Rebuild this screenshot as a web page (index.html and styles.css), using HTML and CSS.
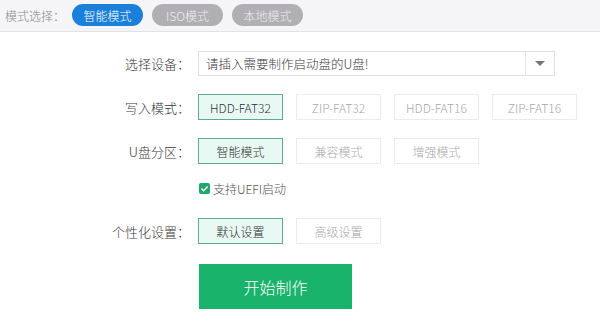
FILE: index.html
```html
<!DOCTYPE html>
<html lang="zh">
<head>
<meta charset="utf-8">
<link rel="stylesheet" href="styles.css">
</head>
<body>
<div class="header">
  <span class="hlabel">模式选择：</span>
  <span class="pill active">智能模式</span>
  <span class="pill">ISO模式</span>
  <span class="pill">本地模式</span>
</div>
<div class="form">
  <div class="row r-select">
    <div class="label">选择设备：</div>
    <div class="select">
      <span class="sel-text">请插入需要制作启动盘的U盘!</span>
      <span class="sel-arrow"><span class="tri"></span></span>
    </div>
  </div>
  <div class="row r-write">
    <div class="label">写入模式：</div>
    <div class="opts">
      <span class="opt on">HDD-FAT32</span>
      <span class="opt">ZIP-FAT32</span>
      <span class="opt">HDD-FAT16</span>
      <span class="opt">ZIP-FAT16</span>
    </div>
  </div>
  <div class="row r-part">
    <div class="label">U盘分区：</div>
    <div class="opts">
      <span class="opt on">智能模式</span>
      <span class="opt">兼容模式</span>
      <span class="opt">增强模式</span>
    </div>
  </div>
  <div class="row r-check">
    <div class="label"></div>
    <label class="check">
      <span class="box"><svg width="11" height="11" viewBox="0 0 11 11"><path d="M2.4 5.6 L4.6 7.7 L8.6 3.4" fill="none" stroke="#fff" stroke-width="1.4"/></svg></span>
      <span class="ctext">支持UEFI启动</span>
    </label>
  </div>
  <div class="row r-pers">
    <div class="label">个性化设置：</div>
    <div class="opts">
      <span class="opt on">默认设置</span>
      <span class="opt">高级设置</span>
    </div>
  </div>
  <div class="row r-start">
    <div class="label"></div>
    <button class="start">开始制作</button>
  </div>
</div>
</body>
</html>
```
FILE: styles.css
```css
html, body {
  margin: 0;
  padding: 0;
  background: #fff;
  font-family: "Noto Sans CJK SC", "Noto Sans", sans-serif;
  font-weight: 300;
}
.header {
  height: 31px;
  background: #f5f5f7;
  border-bottom: 1px solid #e2e2e4;
  display: flex;
  align-items: center;
  padding-left: 5px;
}
.hlabel {
  font-size: 12px;
  color: #8a8a8a;
  width: 67px;
}
.pill {
  display: inline-flex;
  align-items: center;
  justify-content: center;
  width: 71px;
  height: 22px;
  border-radius: 11px;
  background: #b1afb3;
  color: #eee;
  font-size: 12px;
  margin-right: 9px;
  margin-top: -1px;
}
.pill.active {
  background: #1b80d9;
  color: #fff;
}
.form {
  display: flex;
  flex-direction: column;
}
.row {
  display: flex;
  align-items: center;
}
.label {
  width: 190px;
  text-align: right;
  font-size: 13px;
  color: #3a3a3a;
  margin-right: 8px;
  flex: none;
}
.r-select { margin-top: 19px; height: 25px; }
.r-write { margin-top: 18px; height: 26px; }
.r-part { margin-top: 18px; height: 26px; }
.r-check { margin-top: 16px; height: 16px; }
.r-pers { margin-top: 22px; height: 26px; }
.r-start { margin-top: 20px; height: 45px; }
.select {
  width: 357px;
  height: 25px;
  box-sizing: border-box;
  border: 1px solid #e0e0e0;
  display: flex;
  align-items: center;
}
.sel-text {
  flex: 1;
  padding-left: 7px;
  font-size: 12.5px;
  color: #3a3a3a;
}
.sel-arrow {
  width: 28px;
  height: 100%;
  border-left: 1px solid #e6e6e6;
  display: flex;
  align-items: center;
  justify-content: center;
}
.tri {
  width: 0;
  height: 0;
  border-left: 5px solid transparent;
  border-right: 5px solid transparent;
  border-top: 5px solid #777;
}
.opts {
  display: flex;
  gap: 13px;
}
.opt {
  width: 85px;
  height: 26px;
  box-sizing: border-box;
  border: 1px solid #ebebeb;
  display: flex;
  align-items: center;
  justify-content: center;
  font-size: 12px;
  color: #a8a8a8;
  background: #fff;
}
.opt.on {
  background: #e8f8f2;
  border-color: #5fa895;
  color: #333;
}
.check {
  display: flex;
  align-items: center;
  gap: 3px;
  margin-left: 1px;
}
.box {
  width: 11px;
  height: 11px;
  border-radius: 2px;
  background: #20a86a;
  display: flex;
}
.ctext {
  font-size: 12px;
  color: #555;
}
.start {
  margin-left: 1px;
  width: 153px;
  height: 45px;
  border: none;
  background: #19b36b;
  color: #fff;
  font-family: "Noto Sans CJK SC", sans-serif;
  font-weight: 300;
  font-size: 16px;
  padding: 0;
}
```
